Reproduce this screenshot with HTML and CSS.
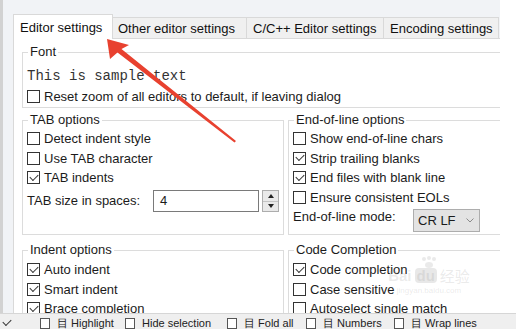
FILE: index.html
```html
<!DOCTYPE html>
<html>
<head>
<meta charset="utf-8">
<link rel="stylesheet" href="styles.css">
</head>
<body>
<div class="shot">
  <div class="main">
    <div class="dialog">
      <div class="tabs">
        <div class="tab active">Editor settings</div>
        <div class="tab t2">Other editor settings</div>
        <div class="tab t3">C/C++ Editor settings</div>
        <div class="tab t4">Encoding settings</div>
      </div>
      <div class="page">
        <fieldset class="group font">
          <legend>Font</legend>
          <div class="sample">This is sample text</div>
          <div class="row"><span class="cb"></span>Reset zoom of all editors to default, if leaving dialog</div>
        </fieldset>

        <div class="grid top">
          <fieldset class="group">
            <legend>TAB options</legend>
            <div class="row"><span class="cb"></span>Detect indent style</div>
            <div class="row"><span class="cb"></span>Use TAB character</div>
            <div class="row"><span class="cb on"></span>TAB indents</div>
            <div class="field">
              <span class="lbl-tab">TAB size in spaces:</span>
              <span class="num">4</span>
              <span class="spin"><span class="up"></span><span class="down"></span></span>
            </div>
          </fieldset>
          <fieldset class="group">
            <legend>End-of-line options</legend>
            <div class="row"><span class="cb"></span>Show end-of-line chars</div>
            <div class="row"><span class="cb on"></span>Strip trailing blanks</div>
            <div class="row"><span class="cb on"></span>End files with blank line</div>
            <div class="row"><span class="cb"></span>Ensure consistent EOLs</div>
            <div class="field eol">
              <span class="lbl-eol">End-of-line mode:</span>
              <span class="combo">CR LF<svg class="chev" width="8" height="5" viewBox="0 0 8 5"><path d="M0.5 0.5 L4 4 L7.5 0.5" fill="none" stroke="#8a8a8a" stroke-width="1"/></svg></span>
            </div>
          </fieldset>
        </div>

        <div class="grid bottom">
          <fieldset class="group">
            <legend>Indent options</legend>
            <div class="row"><span class="cb on"></span>Auto indent</div>
            <div class="row"><span class="cb on"></span>Smart indent</div>
            <div class="row"><span class="cb on"></span>Brace completion</div>
          </fieldset>
          <fieldset class="group">
            <legend>Code Completion</legend>
            <div class="row"><span class="cb on"></span>Code completion</div>
            <div class="row"><span class="cb"></span>Case sensitive</div>
            <div class="row"><span class="cb"></span>Autoselect single match</div>
          </fieldset>
        </div>
      </div>
    </div>
  </div>
  <div class="strip">
    <span class="sitem s0"><span class="scb on"></span></span>
    <span class="sitem s1"><span class="scb"></span>目 Highlight</span>
    <span class="sitem s2"><span class="scb"></span>Hide selection</span>
    <span class="sitem s3"><span class="scb"></span>目 Fold all</span>
    <span class="sitem s4"><span class="scb"></span>目 Numbers</span>
    <span class="sitem s5"><span class="scb"></span>目 Wrap lines</span>
  </div>

  <div class="watermark">
    <svg class="paw" width="22" height="12" viewBox="0 0 22 12"><circle cx="6" cy="3" r="2" fill="currentColor"/><circle cx="11" cy="2" r="2" fill="currentColor"/><circle cx="16" cy="3" r="2" fill="currentColor"/><ellipse cx="11" cy="9" rx="4" ry="3" fill="currentColor"/></svg>
    <div class="wm-line"><span>Bai</span><span class="wm-du">du</span><span class="wm-cn">经验</span></div>
    <div class="wm-url">jingyan.baidu.com</div>
  </div>

  <svg class="arrow" width="516" height="329" viewBox="0 0 516 329">
    <polygon points="107,39 129,45 121.5,49 236,141 234.5,142.5 117.5,52.5 110,59" fill="#e8412f"/>
  </svg>
</div>
</body>
</html>
```
FILE: styles.css
```css
* { box-sizing: border-box; }
html, body { margin: 0; padding: 0; }
body {
  width: 516px;
  height: 329px;
  overflow: hidden;
  background: #ffffff;
  font-family: "Liberation Sans", Arial, sans-serif;
  font-size: 13px;
  color: #1b1b1b;
}
.shot {
  position: relative;
  width: 516px;
  height: 329px;
  display: flex;
  flex-direction: column;
}
.main {
  height: 313px;
  flex: none;
  display: flex;
}
.dialog {
  width: 500px;
  height: 313px;
  overflow: hidden;
  background: #f1f3f6;
  border-left: 3px solid #d2d2d2;
  padding: 14px 0 0 10px;
  display: flex;
  flex-direction: column;
}
.tabs {
  display: flex;
  align-items: flex-end;
  height: 24px;
  flex: none;
}
.tab {
  height: 21px;
  padding: 3px 0 0 6px;
  line-height: 15px;
  white-space: nowrap;
  background: #f0f0f0;
  border: 1px solid #d9d9d9;
  border-bottom: none;
  margin-left: -1px;
  color: #111;
  flex: none;
}
.tab.active {
  width: 100px;
  height: 25px;
  margin: 0 0 -1px 0;
  padding-top: 5px;
  background: #ffffff;
  position: relative;
  z-index: 1;
}
.t2 { width: 135px; padding-left: 5px; }
.t3 { width: 138px; }
.t4 { width: 116px; }

.page {
  flex: 1;
  background: #ffffff;
  border: 1px solid #d9d9d9;
  border-right: none;
  border-bottom: none;
  padding: 0 0 0 8px;
}
.group {
  margin: 0;
  border: 1px solid #dcdcdc;
  padding: 0 0 0 4px;
  min-width: 0;
}
.group legend {
  padding: 0 2px;
  margin-left: 1px;
  line-height: 14px;
}
.font {
  width: 528px;
  margin-top: 6px;
}
.sample {
  font-family: "Liberation Mono", "Courier New", monospace;
  font-size: 14px;
  line-height: 16px;
  margin: 9px 0 3px 0;
  color: #333;
}
.grid {
  display: grid;
  grid-template-columns: 262px 262px;
  column-gap: 4px;
  width: 528px;
}
.grid.top { margin-top: 5.5px; }
.grid.top .group { padding-top: 2px; padding-bottom: 2px; }
.grid.bottom { margin-top: 8px; }
.grid.bottom .group { padding-top: 3px; }

.row {
  display: flex;
  align-items: center;
  height: 19.5px;
  white-space: nowrap;
}
.cb {
  width: 13px;
  height: 13px;
  border: 1px solid #333;
  background: #fff;
  margin-right: 4px;
  flex: none;
  position: relative;
}
.cb.on::after {
  content: "";
  position: absolute;
  left: 2px;
  top: 1.5px;
  width: 7px;
  height: 4px;
  border-left: 1.3px solid #333;
  border-bottom: 1.3px solid #333;
  transform: rotate(-45deg);
}
.field {
  display: flex;
  align-items: center;
  height: 22px;
  margin-top: 2.5px;
  white-space: nowrap;
}
.lbl-tab { width: 126px; line-height: 22px; }
.num {
  width: 106px;
  height: 22px;
  border: 1px solid #7a7a7a;
  background: #fff;
  padding-left: 6px;
  line-height: 20px;
}
.spin {
  width: 17px;
  height: 22px;
  margin-left: 3px;
  border: 1px solid #adadad;
  background: #e9e9e9;
  display: flex;
  flex-direction: column;
}
.spin span {
  flex: 1;
  display: flex;
  align-items: center;
  justify-content: center;
}
.spin .up { border-bottom: 1px solid #c4c4c4; }
.spin .up::before {
  content: "";
  border-left: 3px solid transparent;
  border-right: 3px solid transparent;
  border-bottom: 4px solid #222;
}
.spin .down::before {
  content: "";
  border-left: 3px solid transparent;
  border-right: 3px solid transparent;
  border-top: 4px solid #222;
}
.field.eol {
  height: 23px;
  margin-top: 2px;
  align-items: flex-start;
}
.lbl-eol { width: 120px; line-height: 15px; }
.combo {
  width: 67px;
  height: 23px;
  border: 1px solid #adadad;
  background: #e3e3e3;
  display: flex;
  align-items: center;
  padding-left: 4px;
  line-height: 15px;
}
.chev { margin-left: auto; margin-right: 5px; }

.strip {
  height: 16px;
  flex: none;
  border-top: 1px solid #d6d6d6;
  background: #efefef;
  display: flex;
  overflow: hidden;
  padding-top: 3px;
  font-size: 11px;
  line-height: 12px;
  color: #222;
  white-space: nowrap;
}
.sitem {
  display: flex;
  align-items: flex-start;
  flex: none;
}
.s0 { width: 40px; }
.s1 { width: 85px; }
.s2 { width: 102px; }
.s3 { width: 79px; }
.s4 { width: 88px; }
.s5 { width: 122px; }
.scb {
  width: 10px;
  height: 11px;
  border: 1px solid #555;
  background: #fff;
  margin: 1px 7px 0 0;
  flex: none;
  position: relative;
}
.s0 .scb { margin-left: 1px; border-color: transparent; background: transparent; }
.scb.on::after {
  content: "";
  position: absolute;
  left: 1px;
  top: 0;
  width: 7px;
  height: 4px;
  border-left: 1px solid #333;
  border-bottom: 1px solid #333;
  transform: rotate(-45deg);
}

.watermark {
  position: absolute;
  left: 383px;
  top: 256px;
  width: 92px;
  color: rgba(150, 150, 150, 0.2);
  text-align: center;
  pointer-events: none;
}
.paw { display: block; margin: 0 auto; }
.wm-line {
  display: flex;
  align-items: center;
  justify-content: center;
  font-size: 15px;
  line-height: 15px;
  font-weight: bold;
}
.wm-du {
  background: rgba(150, 150, 150, 0.22);
  border-radius: 4px;
  padding: 0 2px;
  margin: 0 3px;
}
.wm-cn { font-family: "Noto Sans CJK SC", sans-serif; font-weight: normal; }
.wm-url { font-size: 8px; line-height: 10px; margin-top: 3px; }

.arrow {
  position: absolute;
  left: 0;
  top: 0;
  pointer-events: none;
}
```
